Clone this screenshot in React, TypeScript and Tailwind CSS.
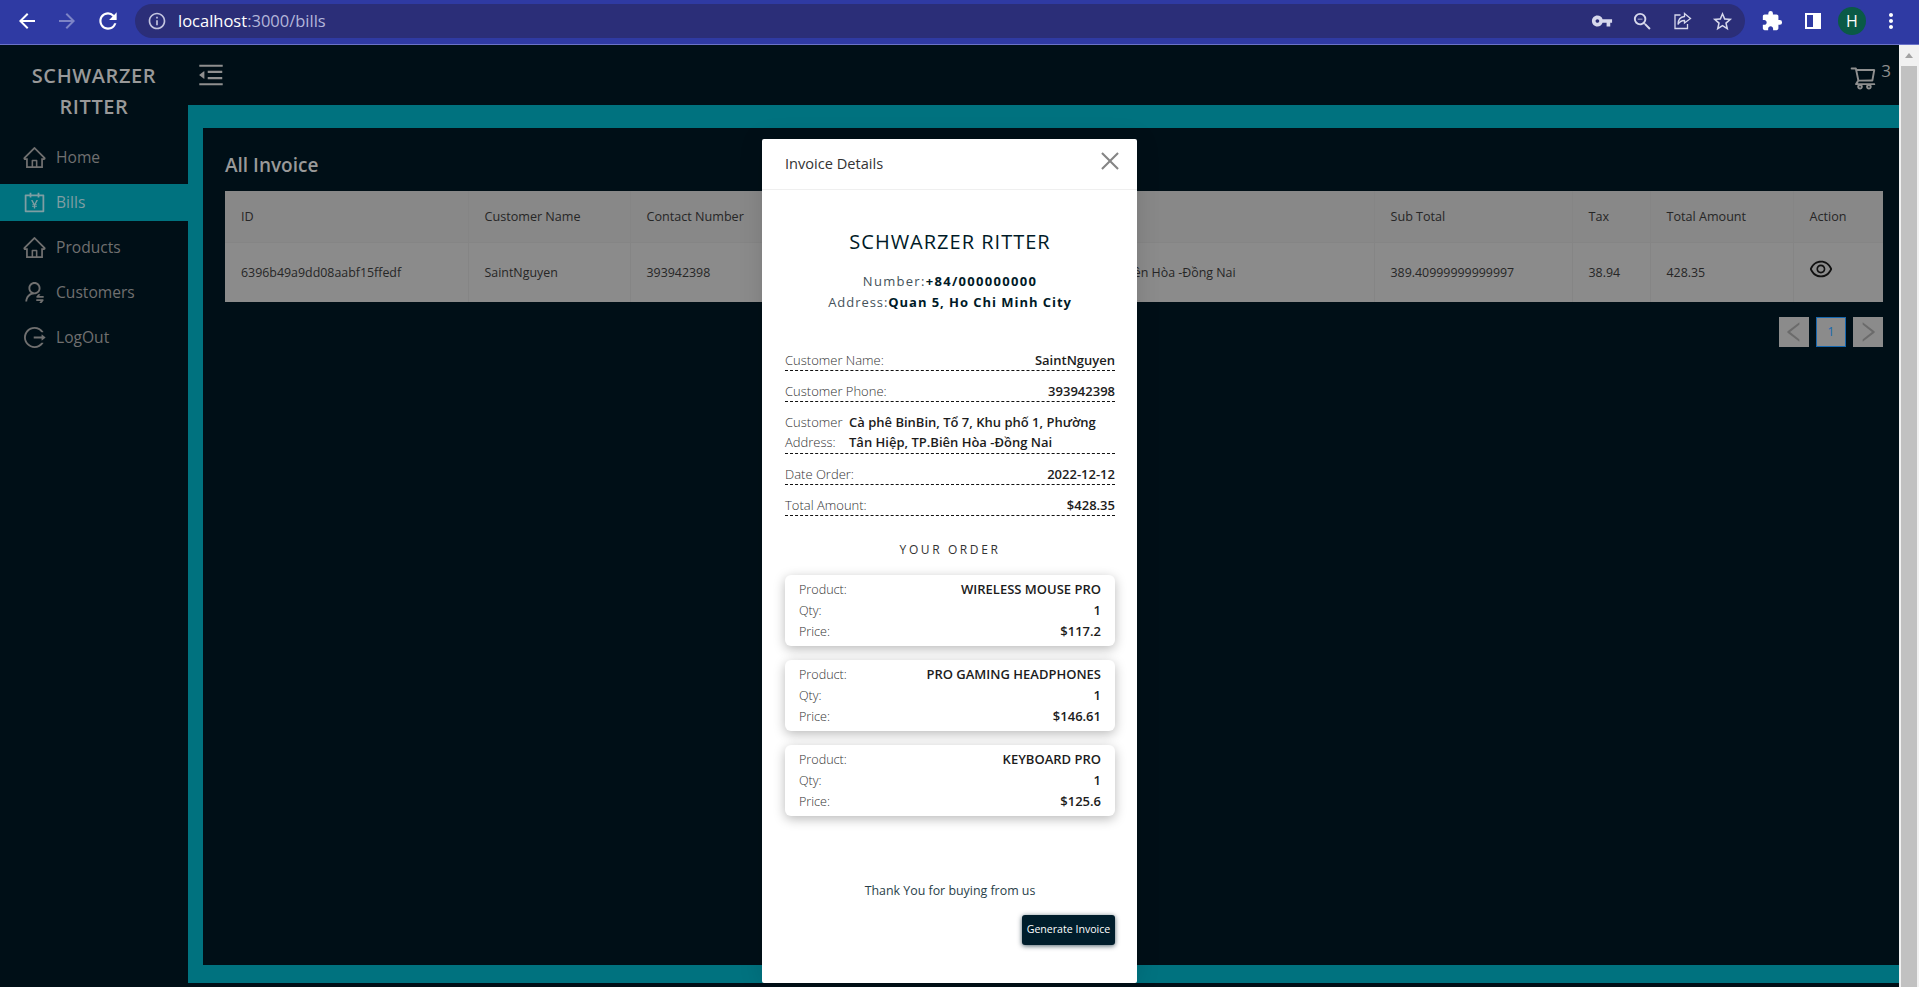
import React from "react";
import {
  AiOutlineAccountBook,
  AiOutlineClose,
  AiOutlineEye,
  AiOutlineHome,
  AiOutlineLeft,
  AiOutlineLogout,
  AiOutlineMenuFold,
  AiOutlineRight,
  AiOutlineShoppingCart,
  AiOutlineUserSwitch,
} from "react-icons/ai";
import {
  MdArrowBack,
  MdArrowForward,
  MdExtension,
  MdInfoOutline,
  MdMoreVert,
  MdRefresh,
  MdStarBorder,
  MdVpnKey,
  MdZoomOut,
} from "react-icons/md";

const navItems = [
  { label: "Home", icon: AiOutlineHome },
  { label: "Bills", icon: AiOutlineAccountBook, active: true },
  { label: "Products", icon: AiOutlineHome },
  { label: "Customers", icon: AiOutlineUserSwitch },
  { label: "LogOut", icon: AiOutlineLogout },
];

const orderItems = [
  { name: "WIRELESS MOUSE PRO", qty: 1, price: "$117.2" },
  { name: "PRO GAMING HEADPHONES", qty: 1, price: "$146.61" },
  { name: "KEYBOARD PRO", qty: 1, price: "$125.6" },
];

function BrowserBar() {
  return (
    <div className="flex h-[45px] shrink-0 items-center border-b border-[#6a72c8] bg-[#2f3aa3] pb-[2px] text-white">
      <div className="flex w-[135px] shrink-0 items-center pl-[15px]">
        <MdArrowBack size={24} className="mr-[16px]" />
        <MdArrowForward size={24} className="mr-[16px] text-[#7d84c6]" />
        <MdRefresh size={26} />
      </div>
      <div className="flex h-[34px] w-[1610px] items-center rounded-full bg-[#2b2e78] pl-[12px] pr-[11px]">
        <MdInfoOutline size={20} className="text-[#c3c5e0]" />
        <span className="ml-[11px] text-[16.5px]">
          localhost<span className="text-[#b4b6da]">:3000/bills</span>
        </span>
        <div className="ml-auto flex items-center gap-[18px] text-[#d7d8ec]">
          <MdVpnKey size={22} />
          <MdZoomOut size={23} />
          <svg width="21" height="20" viewBox="0 0 20 20" fill="none" stroke="currentColor" strokeWidth="1.3">
            <path d="M8 4H2.500v13.500H15V13" />
            <path d="M12 2.500 18 7.500 12 12V9.500c-3 0-5 1-6.500 4 0-4.500 2.500-7.500 6.500-8z" />
          </svg>
          <MdStarBorder size={23} />
        </div>
      </div>
      <div className="ml-[16px] flex items-center">
        <MdExtension size={22} />
        <svg width="18" height="18" viewBox="0 0 18 18" className="ml-[21px]">
          <path fill="white" d="M1 1h16v16H1z" />
          <path fill="#2f3aa3" d="M3 3h6v12H3z" />
        </svg>
        <div className="ml-[16px] flex h-[28px] w-[28px] items-center justify-center rounded-full bg-[#0a5a46] text-[16px]">
          H
        </div>
        <MdMoreVert size={24} className="ml-[13px]" />
      </div>
    </div>
  );
}

function Sidebar() {
  return (
    <aside className="w-[188px] shrink-0 bg-[#000f17] pt-[15px]">
      <div className="text-center text-[20px] leading-[31px] font-semibold tracking-[0.6px] text-[#999999]">
        SCHWARZER
        <br />
        RITTER
      </div>
      <nav className="mt-[17px] flex flex-col gap-[8px]">
        {navItems.map((item) => {
          const Icon = item.icon;
          return (
            <div
              key={item.label}
              className={
                item.active
                  ? "flex h-[37px] items-center bg-[#00727f] pl-[22px] text-[#7f9ea3]"
                  : "flex h-[37px] items-center pl-[22px] text-[#707070]"
              }
            >
              <Icon size={25} />
              <span className="ml-[9px] text-[15.6px]">{item.label}</span>
            </div>
          );
        })}
      </nav>
    </aside>
  );
}

function InvoiceTable() {
  return (
    <table className="w-[1658px] table-fixed border-collapse bg-[#8b8b8b] text-left text-[12.4px] text-[#262626]">
      <colgroup>
        <col className="w-[243px]" />
        <col className="w-[162px]" />
        <col className="w-[169px]" />
        <col className="w-[575px]" />
        <col className="w-[198px]" />
        <col className="w-[78px]" />
        <col className="w-[143px]" />
        <col className="w-[90px]" />
      </colgroup>
      <thead>
        <tr className="h-[51px] border-b border-[#858585] bg-[#888888] text-[12.6px]">
          <th className="border-r border-[#858585] pt-[2px] pl-[16px] font-medium">ID</th>
          <th className="border-r border-[#858585] pt-[2px] pl-[16px] font-medium">Customer Name</th>
          <th className="border-r border-[#858585] pt-[2px] pl-[16px] font-medium">Contact Number</th>
          <th className="border-r border-[#858585] pt-[2px] pl-[16px] font-medium"></th>
          <th className="border-r border-[#858585] pt-[2px] pl-[16px] font-medium">Sub Total</th>
          <th className="border-r border-[#858585] pt-[2px] pl-[16px] font-medium">Tax</th>
          <th className="border-r border-[#858585] pt-[2px] pl-[16px] font-medium">Total Amount</th>
          <th className="pt-[2px] pl-[16px] font-medium">Action</th>
        </tr>
      </thead>
      <tbody>
        <tr className="h-[60px]">
          <td className="border-r border-[#858585] pt-[2px] pl-[16px]">6396b49a9dd08aabf15ffedf</td>
          <td className="border-r border-[#858585] pt-[2px] pl-[16px]">SaintNguyen</td>
          <td className="border-r border-[#858585] pt-[2px] pl-[16px]">393942398</td>
          <td className="border-r border-[#858585] pt-[2px] pl-[16px]">
            Cà phê BinBin, Tổ 7, Khu phố 1, Phường Tân Hiệp, TP.Biên Hòa -Đồng Nai
          </td>
          <td className="border-r border-[#858585] pt-[2px] pl-[16px]">389.40999999999997</td>
          <td className="border-r border-[#858585] pt-[2px] pl-[16px]">38.94</td>
          <td className="border-r border-[#858585] pt-[2px] pl-[16px]">428.35</td>
          <td className="pl-[16px]">
            <AiOutlineEye size={26} className="mb-[6px] -ml-[2px] text-[#111111]" />
          </td>
        </tr>
      </tbody>
    </table>
  );
}

function Pagination() {
  return (
    <div className="mt-[15px] flex justify-end gap-[7px] pr-[16px]">
      <div className="flex h-[30px] w-[30px] items-center justify-center bg-[#8b8b8b] text-[#6b6b6b]">
        <AiOutlineLeft size={26} />
      </div>
      <div className="flex h-[30px] w-[30px] items-center justify-center border border-[#1668b0] bg-[#8b8b8b] text-[12px] text-[#1668b0]">
        1
      </div>
      <div className="flex h-[30px] w-[30px] items-center justify-center bg-[#8b8b8b] text-[#6b6b6b]">
        <AiOutlineRight size={26} />
      </div>
    </div>
  );
}

function InfoRow({ label, value }: { label: string; value: string }) {
  return (
    <div className="flex h-[21px] items-center justify-between border-b border-dashed border-[#111111] pt-[1px] text-[13px]">
      <span className="font-light text-[#333333]">{label}</span>
      <span className="font-semibold text-[#1c1c1c]">{value}</span>
    </div>
  );
}

function InvoiceModal() {
  return (
    <div className="absolute top-[139px] left-[762px] h-[844px] w-[375px] rounded-[2px] bg-white shadow-[0_0_24px_rgba(0,0,0,0.12)]">
      <div className="flex h-[51px] items-center justify-between border-b border-[#efefef] pr-[14px] pl-[23px]">
        <span className="text-[14.6px] text-[#333333]">Invoice Details</span>
        <AiOutlineClose size={26} className="mb-[7px] text-[#858585]" />
      </div>

      <div className="pr-[22px] pl-[23px]">
        <h2 className="mt-[38px] text-center text-[20px] leading-[28px] tracking-[1px] text-[#001a27]">
          SCHWARZER RITTER
        </h2>
        <div className="mt-[15px] text-center text-[13px] leading-[21px] text-[#44525a]">
          <div className="tracking-[1.3px]">
            Number:<span className="font-bold text-[#001a27]">+84/000000000</span>
          </div>
          <div className="tracking-[0.95px]">
            Address:<span className="font-bold text-[#001a27]">Quan 5, Ho Chi Minh City</span>
          </div>
        </div>

        <div className="mt-[37px] flex flex-col gap-[10px]">
          <InfoRow label="Customer Name:" value="SaintNguyen" />
          <InfoRow label="Customer Phone:" value="393942398" />
          <div className="flex h-[42px] items-start border-b border-dashed border-[#111111] text-[13px] leading-[20px]">
            <span className="w-[64px] shrink-0 font-light text-[#333333]">Customer Address:</span>
            <span className="font-semibold text-[#1c1c1c]">
              Cà phê BinBin, Tổ 7, Khu phố 1, Phường Tân Hiệp, TP.Biên Hòa -Đồng Nai
            </span>
          </div>
          <InfoRow label="Date Order:" value="2022-12-12" />
          <InfoRow label="Total Amount:" value="$428.35" />
        </div>

        <div className="mt-[25px] text-center text-[12px] leading-[18px] tracking-[2.6px] text-[#333333]">
          YOUR ORDER
        </div>

        <div className="mt-[16px] flex flex-col gap-[14px]">
          {orderItems.map((item) => (
            <div
              key={item.name}
              className="flex h-[71px] flex-col justify-center rounded-[6px] bg-white px-[14px] text-[12.6px] leading-[21px] shadow-[0_3px_12px_rgba(0,0,0,0.28)]"
            >
              <div className="flex justify-between">
                <span className="font-light text-[#333333]">Product:</span>
                <span className="text-[13px] font-semibold text-[#1c1c1c]">{item.name}</span>
              </div>
              <div className="flex justify-between">
                <span className="font-light text-[#333333]">Qty:</span>
                <span className="text-[13px] font-semibold text-[#1c1c1c]">{item.qty}</span>
              </div>
              <div className="flex justify-between">
                <span className="font-light text-[#333333]">Price:</span>
                <span className="text-[13px] font-semibold text-[#1c1c1c]">{item.price}</span>
              </div>
            </div>
          ))}
        </div>

        <div className="mt-[65px] text-center text-[12.4px] leading-[20px] text-[#2a3f4a]">
          Thank You for buying from us
        </div>
        <div className="mt-[14px] flex justify-end">
          <button className="h-[30px] w-[93px] rounded-[3px] bg-[#001d2b] text-[10.6px] text-white shadow-[0_1px_5px_rgba(0,29,43,0.7)]">
            Generate Invoice
          </button>
        </div>
      </div>
    </div>
  );
}

export default function App() {
  return (
    <div
      className="relative flex h-screen flex-col overflow-hidden bg-[#000f17]"
      style={{ fontFamily: '"Open Sans", "Noto Sans", sans-serif' }}
    >
      <BrowserBar />
      <div className="flex min-h-0 flex-1">
        <Sidebar />

        <div className="flex min-w-0 flex-1 flex-col pb-[4px]">
          <header className="flex h-[60px] shrink-0 items-center justify-between px-[8px] text-[#8f8f8f]">
            <AiOutlineMenuFold size={30} />
            <div className="flex items-start">
              <AiOutlineShoppingCart size={28} className="mt-[6px]" />
              <span className="mt-[1px] ml-[4px] text-[17px] leading-[24px]">3</span>
            </div>
          </header>
          <div className="flex min-h-0 flex-1 flex-col bg-[#00727f] pt-[23px] pb-[18px] pl-[15px]">
            <main className="flex-1 bg-[#000f17] pt-[23px] pl-[22px]">
              <h1 className="mb-[11px] text-[19px] leading-[29px] font-semibold text-[#999999]">All Invoice</h1>
              <InvoiceTable />
              <Pagination />
            </main>
          </div>
        </div>

        <div className="flex w-[20px] shrink-0 flex-col bg-[#f1f1f1]">
          <div className="flex h-[21px] items-center justify-center">
            <div className="h-0 w-0 border-x-[4px] border-b-[5px] border-x-transparent border-b-[#a3a3a3]" />
          </div>
          <div className="mx-[2px] flex-1 bg-[#c1c1c1]" />
        </div>
      </div>
      <InvoiceModal />
    </div>
  );
}
